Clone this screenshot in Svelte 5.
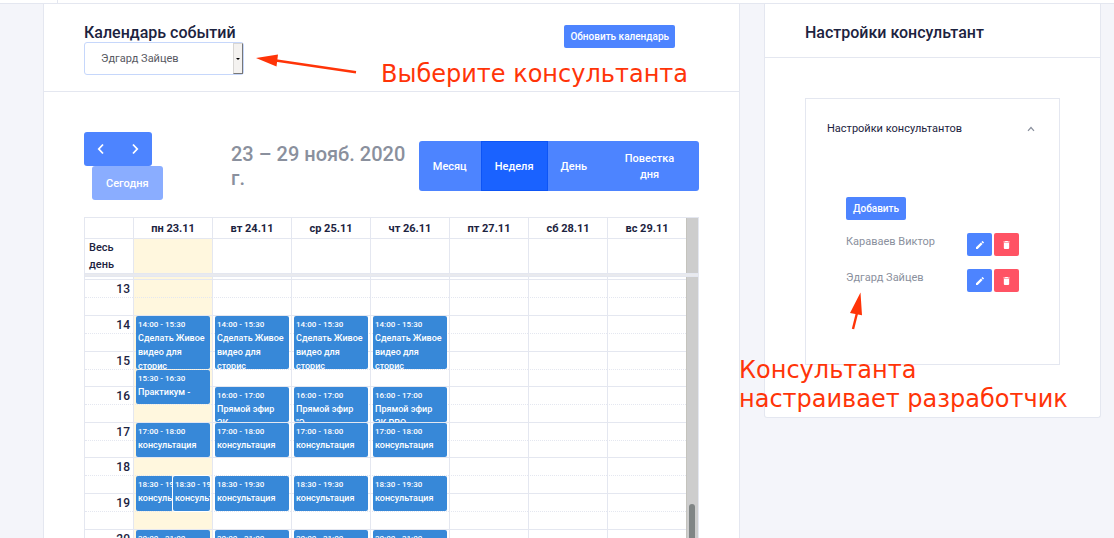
<script>
  const days = ['пн 23.11', 'вт 24.11', 'ср 25.11', 'чт 26.11', 'пт 27.11', 'сб 28.11', 'вс 29.11'];
  const views = ['Месяц', 'Неделя', 'День', 'Повестка дня'];
  const consultants = ['Караваев Виктор', 'Эдгард Зайцев'];

  // Half-hour slots starting at 13:00, heights in whole pixels.
  const firstHour = 13;
  const slots = [18, 18, 18, 18, 18, 17, 18, 18, 18, 17, 18, 18, 18, 18, 18, 18];
  const slotRows = slots.map((h) => h + 'px').join(' ');

  const live = { time: '14:00 - 15:30', title: 'Сделать Живое видео для\nсторис', from: 3, to: 6 };
  const air = (title) => ({ time: '16:00 - 17:00', title, from: 7, to: 9 });
  const talk = { time: '17:00 - 18:00', title: 'консультация', from: 9, to: 11 };
  const evening = { time: '18:30 - 19:30', title: 'консультация', from: 12, to: 14 };
  const late = { time: '20:00 - 21:00', title: 'консультация', from: 15, to: 17 };

  const events = [
    [
      live,
      { time: '15:30 - 16:30', title: 'Практикум -', from: 6, to: 8 },
      talk,
      { ...evening, half: 'first' },
      { ...evening, half: 'second' },
      late
    ],
    [live, air('Прямой эфир\nЗК'), talk, evening, late],
    [live, air('Прямой эфир\n"Э'), talk, evening, late],
    [live, air('Прямой эфир\nЗК PRO'), talk, evening, late],
    [],
    [],
    []
  ];

  let view = $state('Неделя');
  let consultant = $state('Эдгард Зайцев');
  let open = $state(true);
</script>

<div class="page">
  <div class="topbar"></div>
  <main class="columns">
    <section class="card">
      <header class="card-head main-head">
        <div>
          <h1><label for="consultant">Календарь событий</label></h1>
          <div class="select">
            <select id="consultant" bind:value={consultant}>
              {#each consultants as name}
                <option>{name}</option>
              {/each}
            </select>
            <span class="drop"></span>
          </div>
        </div>
        <button class="btn small">Обновить календарь</button>
      </header>

      <div class="card-body">
        <div class="toolbar">
          <div class="nav">
            <div class="arrows">
              <button aria-label="Назад">
                <svg width="8" height="12" viewBox="0 0 8 12"><path d="M6 1.5 1.8 6 6 10.500" /></svg>
              </button>
              <button aria-label="Вперёд">
                <svg width="8" height="12" viewBox="0 0 8 12"><path d="M2 1.5 6.200 6 2 10.500" /></svg>
              </button>
            </div>
            <button class="today" disabled>Сегодня</button>
          </div>
          <h2>23 – 29 нояб. 2020 г.</h2>
          <div class="views">
            {#each views as name}
              <button class:active={view === name} onclick={() => (view = name)}>{name}</button>
            {/each}
          </div>
        </div>

        <div class="calendar">
          <div class="pane">
            <table>
              <thead>
                <tr class="names">
                  <th class="axis"></th>
                  {#each days as day}<th>{day}</th>{/each}
                </tr>
              </thead>
              <tbody>
                <tr class="allday">
                  <td class="axis">Весь день</td>
                  {#each days as day, i}<td class:now={i === 0}></td>{/each}
                </tr>
              </tbody>
            </table>
            <div class="track"></div>
          </div>
          <div class="divider"></div>
          <div class="pane">
            <div class="grid">
              <table>
                <tbody>
                  <tr class="lead">
                    <td class="axis"></td>
                    {#each days as day, i}<td class:now={i === 0}></td>{/each}
                  </tr>
                  {#each slots as h, s}
                    <tr class:minor={s % 2 === 1} style:height="{h}px">
                      <td class="axis" class:hour={s % 2 === 0}>{s % 2 ? '' : firstHour + s / 2}</td>
                      {#each days as day, i}<td class:now={i === 0}></td>{/each}
                    </tr>
                  {/each}
                </tbody>
              </table>
              <div class="events">
                {#each events as list}
                  <div class="day" style:grid-template-rows={slotRows}>
                    {#each list as e}
                      <a href="#event" class="event {e.half ?? ''}" style:grid-row="{e.from} / {e.to}">
                        <span class="time">{e.time}</span>
                        <span class="title">{e.title}</span>
                      </a>
                    {/each}
                  </div>
                {/each}
              </div>
            </div>
            <div class="track"><div class="thumb"></div></div>
          </div>
        </div>
      </div>
    </section>

    <section class="card side">
      <header class="card-head"><h1>Настройки консультант</h1></header>
      <div class="side-body">
        <div class="accordion">
          <button class="toggle" aria-expanded={open} onclick={() => (open = !open)}>
            <span>Настройки консультантов</span>
            <svg width="8" height="6" viewBox="0 0 8 6"><path d="M1 4.800 4 1.500 7 4.800" /></svg>
          </button>
          {#if open}
            <div class="people">
              <button class="btn small">Добавить</button>
              {#each consultants as name}
                <div class="person">
                  <span>{name}</span>
                  <div class="actions">
                    <button class="btn icon" aria-label="Изменить">
                      <svg width="8" height="8" viewBox="3 3 18 18"><path d="M3 17.250V21h3.750L17.810 9.940l-3.750-3.750L3 17.250zM20.710 7.040a1 1 0 0 0 0-1.410l-2.340-2.340a1 1 0 0 0-1.410 0l-1.830 1.830 3.750 3.750 1.830-1.830z" /></svg>
                    </button>
                    <button class="btn icon danger" aria-label="Удалить">
                      <svg width="7" height="8" viewBox="5 3 14 18"><path d="M6 19c0 1.100.9 2 2 2h8c1.100 0 2-.9 2-2V7H6v12zM19 4h-3.500l-1-1h-5l-1 1H5v2h14V4z" /></svg>
                    </button>
                  </div>
                </div>
              {/each}
            </div>
          {/if}
        </div>
      </div>
    </section>
  </main>

  <svg class="marks" width="1114" height="538" aria-hidden="true">
    <path class="line" d="M276 60.500 356 72.200M857 313 853 329" />
    <path class="head" d="M256 58 278 54.500 276.500 66.500ZM860.500 292.500 850 313 862 315.200Z" />
  </svg>
  <p class="note choose">Выберите консультанта</p>
  <p class="note config">Консультанта<br />настраивает разработчик</p>
</div>

<style>
  :global(body) {
    margin: 0;
    background: #f4f5fa;
  }
  .page {
    position: relative;
    height: 100vh;
    overflow: hidden;
    font: 400 11px/18px Roboto, sans-serif;
    color: #1c2340;
  }
  .page * {
    box-sizing: border-box;
  }
  button,
  select {
    font: inherit;
    border: 0;
    margin: 0;
    cursor: pointer;
  }
  .topbar {
    height: 4px;
    padding-left: 57px;
    background: #fff;
    border-bottom: 1px solid #e4e7f0;
  }
  .topbar::before {
    content: '';
    display: block;
    width: 1px;
    height: 3px;
    background: #e4e7f0;
  }
  .columns {
    display: grid;
    grid-template-columns: 697fr 337fr;
    gap: 24px;
    align-items: start;
    padding: 0 13px 0 43px;
  }
  .card {
    background: #fff;
    border: 1px solid #e4e7f0;
    border-top: 0;
    border-radius: 0 0 3px 3px;
  }
  .card-head {
    padding: 19px 40px 14px;
    border-bottom: 1px solid #e4e7f0;
  }
  .main-head {
    display: flex;
    justify-content: space-between;
    align-items: flex-start;
    padding: 19px 64px 16px 40px;
  }
  .main-head .btn {
    margin-top: 2px;
    padding: 0 6px;
  }
  h1 {
    margin: 0;
    font-size: 16px;
    line-height: 20px;
    font-weight: 500;
  }
  .main-head h1 {
    line-height: 19px;
  }
  .select {
    position: relative;
    width: 160px;
  }
  select {
    display: block;
    width: 100%;
    height: 33px;
    padding: 0 16px;
    border: 1px solid #c6d7fb;
    border-radius: 3px;
    background: #fff;
    color: #575962;
    appearance: none;
  }
  .drop {
    position: absolute;
    top: 1px;
    right: 1px;
    bottom: 1px;
    width: 10px;
    display: grid;
    place-items: center;
    background: #f4f2f0;
    border: 1px solid #d8d6d4;
    border-right-color: #777;
    border-bottom-color: #777;
    pointer-events: none;
  }
  .drop::before {
    content: '';
    border: 2px solid transparent;
    border-top-color: #000;
    border-bottom: 0;
  }
  .btn {
    background: #4d84ff;
    color: #fff;
    border-radius: 2px;
    font-weight: 500;
  }
  .small {
    height: 23px;
    padding: 0 7px;
    font-size: 10px;
    line-height: 23px;
  }
  .card-body {
    padding: 40px 40px 0;
  }
  .toolbar {
    display: grid;
    grid-template-columns: 147px 1fr auto;
    align-items: center;
    margin-bottom: 17px;
    line-height: 16px;
    font-weight: 500;
  }
  .arrows {
    display: flex;
    width: 68px;
  }
  .arrows button {
    display: grid;
    place-items: center;
    flex: 1;
    height: 34px;
    padding: 0;
    background: #4d84ff;
  }
  .arrows button:first-child {
    border-radius: 3px 0 0 3px;
  }
  .arrows button:last-child {
    border-radius: 0 3px 3px 0;
  }
  .arrows path {
    fill: none;
    stroke: #fff;
    stroke-width: 1.8;
  }
  .today {
    height: 34px;
    margin-left: 8px;
    padding: 1px 14px 0;
    border-radius: 3px;
    background: #8aadff;
    color: #fff;
  }
  h2 {
    margin: 0;
    padding-right: 10px;
    font-size: 20px;
    line-height: 24px;
    font-weight: 500;
    color: #8a909d;
  }
  .views {
    display: flex;
    height: 50px;
    border-radius: 3px;
    overflow: hidden;
  }
  .views button {
    padding: 2px 14px 0;
    background: #4d84ff;
    color: #fff;
  }
  .views button:nth-child(3) {
    padding: 2px 13px 0;
  }
  .views button:last-child {
    width: 99px;
    padding: 2px 20px 0;
  }
  .views .active {
    background: #1a62ff;
    box-shadow: inset 0 0 0 1px #0d55f5;
  }
  .calendar {
    border: 1px solid #e4e7f0;
    border-bottom: 0;
  }
  .pane {
    display: grid;
    grid-template-columns: 1fr 12px;
  }
  .track {
    background: #cdcdcd;
    border-left: 1px solid #c4c3bd;
  }
  .thumb {
    width: 6px;
    height: 80px;
    margin: 227px 0 0 2px;
    border-radius: 3px;
    background: #808585;
  }
  .divider {
    height: 4px;
    background: #e9eaee;
    border-top: 1px solid #e4e7f0;
    border-bottom: 1px solid #e4e7f0;
  }
  table {
    width: 100%;
    border-collapse: separate;
    border-spacing: 0;
    table-layout: fixed;
    line-height: 17px;
    font-weight: 500;
  }
  th,
  td {
    padding: 0;
    border-left: 1px solid #e4e7f0;
  }
  .axis {
    width: 48px;
    border-left: 0;
  }
  .names th {
    height: 21px;
    font-weight: 700;
    border-bottom: 1px solid #e4e7f0;
  }
  .allday td {
    height: 34px;
  }
  .allday .axis {
    padding: 0 4px;
  }
  .now {
    background: #fff7de;
  }
  .lead {
    height: 2px;
  }
  .grid {
    position: relative;
  }
  .grid tr:not(.lead) td {
    border-top: 1px solid #e4e7f0;
  }
  .grid tr.minor td {
    border-top-style: dotted;
  }
  .hour {
    padding: 2px 3px 0 0;
    text-align: right;
    font-size: 12px;
    line-height: 15px;
  }
  .events {
    position: absolute;
    inset: 2px 0 0 48px;
    display: grid;
    grid-template-columns: repeat(7, 1fr);
  }
  .day {
    display: grid;
    grid-template-columns: 1fr 1fr;
    padding: 0 2px 0 3px;
  }
  .event {
    grid-column: 1 / 3;
    margin-top: 1px;
    padding: 2px 0 0 2px;
    min-width: 0;
    overflow: hidden;
    border-radius: 2px;
    background: #3788d8;
    color: #fff;
    font-size: 9px;
    line-height: 14px;
    font-weight: 500;
    text-decoration: none;
  }
  .event span {
    display: block;
    white-space: pre-line;
  }
  .event .time {
    font-size: 8px;
    line-height: 13px;
    white-space: nowrap;
  }
  .first {
    grid-column: 1 / 2;
  }
  .second {
    grid-column: 2 / 3;
    box-shadow: 0 0 0 1px #fff;
  }
  .side-body {
    padding: 40px 40px 52px;
  }
  .accordion {
    border: 1px solid #e4e7f0;
  }
  .toggle {
    display: flex;
    justify-content: space-between;
    align-items: center;
    width: 100%;
    height: 58px;
    padding: 2px 24px 0 21px;
    background: none;
    color: #1c2340;
  }
  .toggle path {
    fill: none;
    stroke: #8a909d;
    stroke-width: 1.2;
  }
  .people {
    padding: 40px 40px 72px;
    color: #8a909d;
  }
  .person {
    display: flex;
    justify-content: space-between;
    height: 23px;
    margin-top: 13px;
    line-height: 18px;
  }
  .actions {
    display: flex;
    gap: 2px;
  }
  .icon {
    display: grid;
    place-items: center;
    width: 25px;
    height: 23px;
    padding: 0;
  }
  .icon path {
    fill: #fff;
  }
  .danger {
    background: #ff5364;
  }
  .marks {
    position: absolute;
    top: 0;
    left: 0;
    pointer-events: none;
  }
  .line {
    stroke: #ff3408;
    stroke-width: 2.4;
  }
  .head {
    fill: #ff3408;
  }
  .note {
    position: absolute;
    margin: 0;
    font: 24px/29px 'DejaVu Sans', sans-serif;
    color: #ff3408;
    white-space: nowrap;
    pointer-events: none;
  }
  .choose {
    left: 381px;
    top: 60px;
  }
  .config {
    left: 739px;
    top: 356px;
  }
</style>
